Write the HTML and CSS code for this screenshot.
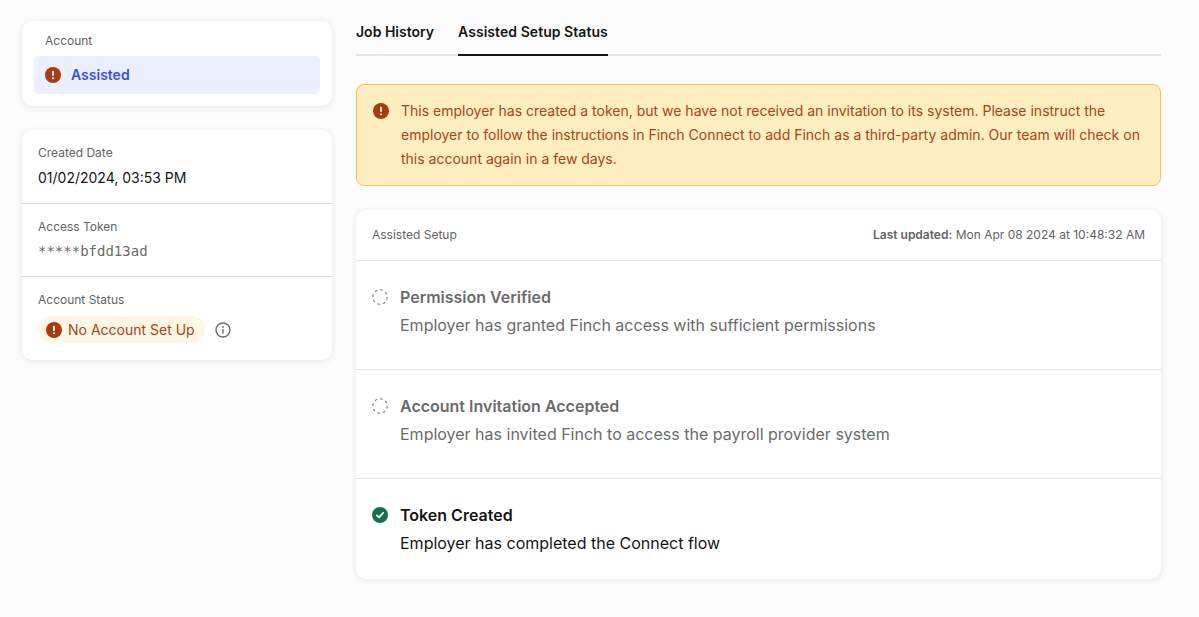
FILE: index.html
```html
<!DOCTYPE html>
<html lang="en">
<head>
<meta charset="utf-8">
<title>Assisted Setup Status</title>
<link rel="stylesheet" href="styles.css">
</head>
<body>
<svg class="defs" width="0" height="0" aria-hidden="true">
  <symbol id="alert" viewBox="0 0 16 16">
    <circle cx="8" cy="8" r="8" fill="currentColor"/>
    <rect x="7.1" y="3.8" width="1.8" height="5.2" rx="0.9" fill="#fff"/>
    <circle cx="8" cy="11.3" r="1" fill="#fff"/>
  </symbol>
</svg>
<div class="page">
  <aside class="sidebar">
    <section class="card account">
      <div class="account-label">Account</div>
      <div class="account-item">
        <svg class="icon alert"><use href="#alert"/></svg>
        <span>Assisted</span>
      </div>
    </section>
    <section class="card details">
      <div class="detail first">
        <div class="detail-label">Created Date</div>
        <div class="detail-value">01/02/2024, 03:53 PM</div>
      </div>
      <div class="detail">
        <div class="detail-label">Access Token</div>
        <div class="detail-value mono">*****bfdd13ad</div>
      </div>
      <div class="detail last">
        <div class="detail-label">Account Status</div>
        <div class="status-row">
          <span class="pill"><svg class="icon alert"><use href="#alert"/></svg>No Account Set Up</span>
          <svg class="info" viewBox="0 0 16 16" fill="none">
            <circle cx="8" cy="8" r="7" stroke="#6b6b6b" stroke-width="1.4"/>
            <rect x="7.3" y="7" width="1.4" height="4.6" fill="#6b6b6b"/>
            <circle cx="8" cy="4.9" r="0.9" fill="#6b6b6b"/>
          </svg>
        </div>
      </div>
    </section>
  </aside>
  <main class="main">
    <nav class="tabs">
      <a class="tab">Job History</a>
      <a class="tab active">Assisted Setup Status</a>
    </nav>
    <div class="banner">
      <svg class="icon alert banner-icon"><use href="#alert"/></svg>
      <p>This employer has created a token, but we have not received an invitation to its system. Please instruct the employer to follow the instructions in Finch Connect to add Finch as a third-party admin. Our team will check on this account again in a few days.</p>
    </div>
    <section class="card setup">
      <header class="setup-head">
        <span>Assisted Setup</span>
        <span><b>Last updated:</b> Mon Apr 08 2024 at 10:48:32 AM</span>
      </header>
      <div class="step pending">
        <svg class="icon" viewBox="0 0 16 16" fill="none"><circle cx="8" cy="8" r="7.2" stroke="#7a7a7a" stroke-width="1.1" stroke-dasharray="2.6 3.05"/></svg>
        <div>
          <div class="step-title">Permission Verified</div>
          <div class="step-text">Employer has granted Finch access with sufficient permissions</div>
        </div>
      </div>
      <div class="step pending">
        <svg class="icon" viewBox="0 0 16 16" fill="none"><circle cx="8" cy="8" r="7.2" stroke="#7a7a7a" stroke-width="1.1" stroke-dasharray="2.6 3.05"/></svg>
        <div>
          <div class="step-title">Account Invitation Accepted</div>
          <div class="step-text">Employer has invited Finch to access the payroll provider system</div>
        </div>
      </div>
      <div class="step">
        <svg class="icon" viewBox="0 0 16 16" fill="none"><circle cx="8" cy="8" r="8" fill="#14714a"/><path d="M4.8 8.3l2.2 2.1 4.2-4.5" stroke="#fff" stroke-width="1.7" stroke-linecap="round" stroke-linejoin="round"/></svg>
        <div>
          <div class="step-title">Token Created</div>
          <div class="step-text">Employer has completed the Connect flow</div>
        </div>
      </div>
    </section>
  </main>
</div>
</body>
</html>
```
FILE: styles.css
```css
* { box-sizing: border-box; }
html, body { margin: 0; height: 100%; }
body {
  background: #fcfcfc;
  color: #161616;
  font-family: Inter, "Liberation Sans", sans-serif;
  overflow: hidden;
}
.defs { position: absolute; }
.page {
  display: flex;
  gap: 24px;
  padding: 21px 38px 0 22px;
}
.sidebar {
  width: 310px;
  flex: none;
  display: flex;
  flex-direction: column;
  gap: 24px;
}
.main { flex: 1; min-width: 0; }
.card {
  background: #fff;
  border-radius: 10px;
  box-shadow: 0 1px 6px rgba(0, 0, 0, 0.09);
}
.icon { width: 16px; height: 16px; flex: none; display: block; }
.alert { color: #a63c10; }

.account { padding: 12px; height: 85px; }
.account-label {
  font-size: 12px;
  line-height: 16px;
  color: #636363;
  padding-left: 11px;
}
.account-item {
  display: flex;
  align-items: center;
  gap: 10px;
  height: 38px;
  margin-top: 7px;
  padding: 0 0 1px 11px;
  background: #eceffd;
  border-radius: 4px;
  color: #3a4fe0;
  font-size: 14px;
  font-weight: 600;
}

.detail {
  padding: 15px 16px;
  border-bottom: 1px solid #d9d9d9;
}
.detail.first .detail-value { margin-top: 7px; }
.detail.last { border-bottom: 0; padding-bottom: 17px; }
.detail-label {
  font-size: 12px;
  line-height: 16px;
  color: #636363;
}
.detail-value {
  margin-top: 6px;
  font-size: 14px;
  line-height: 20px;
  color: #161616;
}
.detail-value.mono {
  font-family: "DejaVu Sans Mono", "Liberation Mono", monospace;
  font-size: 14px;
  color: #6b6b6b;
}
.status-row {
  display: flex;
  align-items: center;
  gap: 10px;
  margin-top: 8px;
}
.pill {
  display: inline-flex;
  align-items: center;
  gap: 6px;
  height: 27px;
  padding: 0 10px 0 8px;
  background: #fef7e6;
  border-radius: 14px;
  color: #a8431a;
  font-size: 14px;
}
.info { width: 16px; height: 16px; }

.tabs {
  display: flex;
  gap: 24px;
  height: 35px;
  border-bottom: 2px solid #e2e5ee;
}
.tab {
  height: 35px;
  padding-top: 2px;
  font-size: 14px;
  line-height: 18px;
  font-weight: 600;
  color: #161616;
}
.tab.active { border-bottom: 2px solid #161616; letter-spacing: 0.05px; }

.banner {
  display: flex;
  gap: 12px;
  margin-top: 28px;
  height: 102px;
  padding: 14px 16px 0;
  background: #feeebf;
  border: 1px solid #fbc158;
  border-radius: 8px;
  color: #a8431a;
}
.banner .alert { color: #a63c10; }
.banner p {
  margin: 0;
  font-size: 14px;
  line-height: 24px;
}
.banner-icon { margin-top: 4px; }

.setup { margin-top: 24px; height: 369px; }
.setup-head {
  display: flex;
  justify-content: space-between;
  align-items: center;
  height: 51px;
  padding: 0 16px 2px;
  border-bottom: 1px solid #e3e3e3;
  font-size: 12px;
  color: #636363;
}
.setup-head b { font-weight: 600; }
.step {
  display: flex;
  gap: 12px;
  height: 109px;
  padding: 26px 16px 0;
  border-bottom: 1px solid #e3e3e3;
}
.step:last-child { border-bottom: 0; }
.step > .icon { margin-top: 2px; }
.step-title {
  font-size: 16px;
  line-height: 20px;
  font-weight: 600;
  color: #161616;
}
.step-text {
  margin-top: 8px;
  font-size: 16px;
  line-height: 20px;
  color: #161616;
}
.pending .step-title, .pending .step-text { color: #6b6b6b; }
```
